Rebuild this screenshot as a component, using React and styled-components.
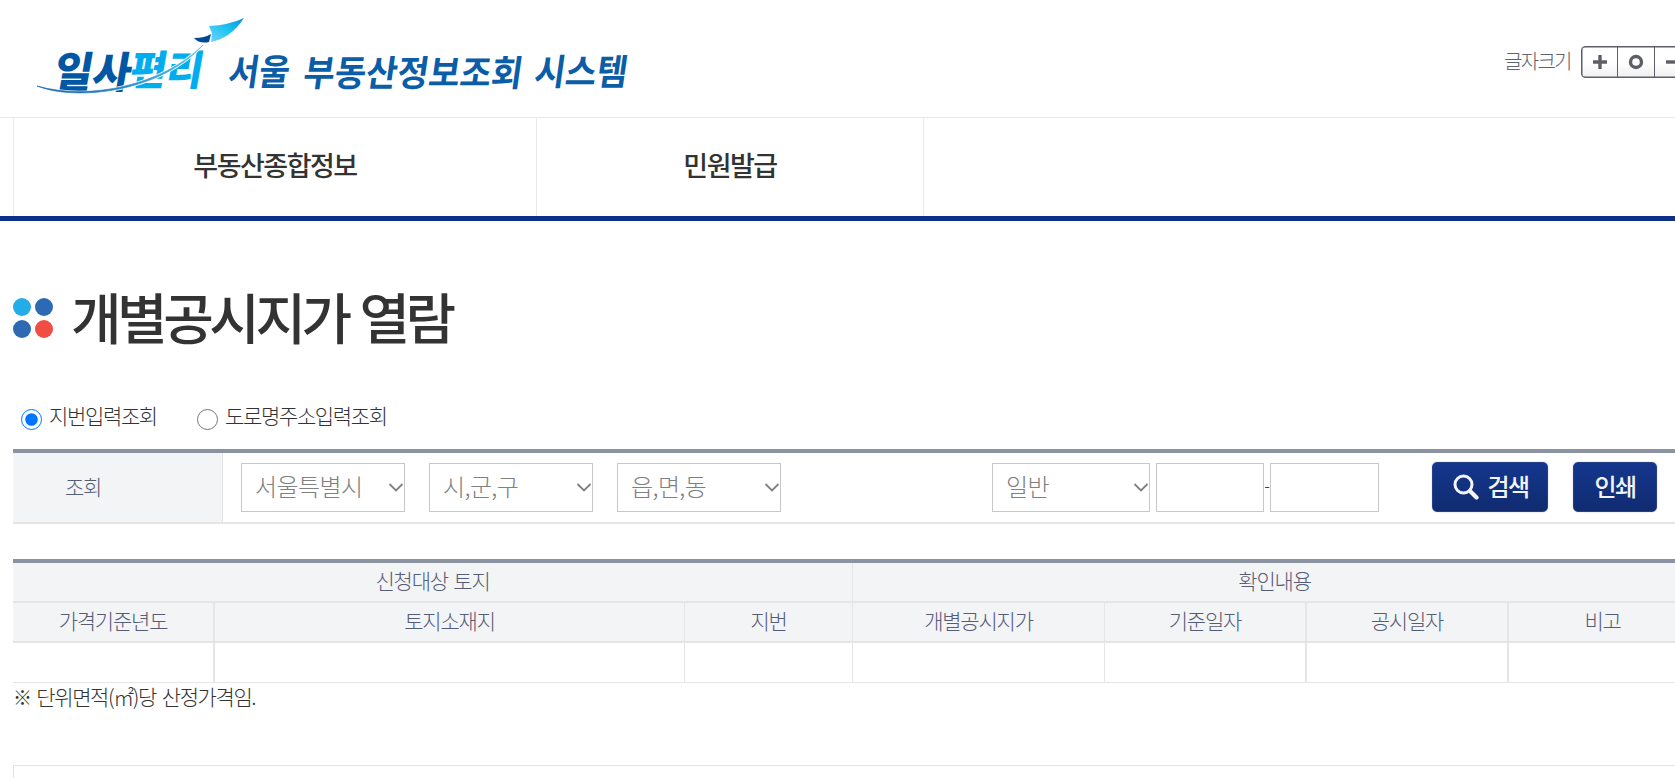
import React from "react";
import styled, { createGlobalStyle } from "styled-components";

const GlobalStyle = createGlobalStyle`
  * { box-sizing: border-box; }
  body {
    margin: 0;
    background: #fff;
    color: #333;
    font-family: "Noto Sans CJK KR", sans-serif;
    font-size: 21px;
    font-weight: 300;
    letter-spacing: -1.4px;
  }
  input, select, button { font: inherit; letter-spacing: inherit; }
`;

const Page = styled.div`
  width: 100%;
  height: 778px;
  overflow: hidden;
`;

const Header = styled.header`
  display: flex;
  justify-content: space-between;
  height: 117px;
`;

const LogoArt = styled.svg`
  display: block;
  width: 660px;
  height: 117px;
  flex: none;
`;

const FontSizer = styled.div`
  display: flex;
  align-items: center;
  gap: 10px;
  height: 32px;
  margin-top: 46px;
  width: 171px;
  flex: none;
  color: #5f636b;
`;

const SizerLabel = styled.span`
  width: 67px;
  padding-bottom: 4px;
  white-space: nowrap;
  flex: none;
  font-size: 20px;
  letter-spacing: -1.7px;
`;

const SizerButtons = styled.div`
  display: flex;
  flex: none;
  height: 32px;
  border: 1px solid #5c5e68;
  border-radius: 4px;
  box-shadow: inset 0 0 0 0.5px #5c5e68;
  background: linear-gradient(#fff 50%, #f0f0f2);
`;

const SizerButton = styled.button`
  width: ${(p) => (p.$first ? 35 : 37)}px;
  padding: 0;
  border: 0;
  border-left: ${(p) => (p.$first ? 0 : "1px solid #5c5e68")};
  background: none;
  display: flex;
  align-items: center;
  justify-content: center;
`;

const Nav = styled.nav`
  display: flex;
  height: 104px;
  padding-left: 13px;
  border-top: 1px solid #e9e9e9;
  border-bottom: 5px solid #0e3088;
`;

const NavItem = styled.a`
  display: flex;
  align-items: center;
  justify-content: center;
  width: ${(p) => p.$w}px;
  padding-bottom: 5px;
  border-left: 1px solid #e9e9e9;
  border-right: ${(p) => (p.$last ? "1px solid #e9e9e9" : 0)};
  font-size: 27px;
  font-weight: 500;
  letter-spacing: -1.5px;
`;

const Main = styled.main`
  width: 1696px;
  padding-left: 13px;
`;

const TitleRow = styled.div`
  display: flex;
  align-items: center;
  gap: 18px;
  height: 60px;
  margin-top: 67px;
`;

const Dots = styled.div`
  display: grid;
  grid-template-columns: 18px 18px;
  gap: 4px;
`;

const Dot = styled.i`
  height: 18px;
  border-radius: 50%;
  background: ${(p) => p.$c};
`;

const Title = styled.h1`
  margin: 0;
  padding-bottom: 7px;
  font-size: 55px;
  line-height: 60px;
  font-weight: 500;
  letter-spacing: -4.5px;
  word-spacing: 4px;
`;

const Modes = styled.div`
  display: flex;
  height: 101px;
  padding: 53px 0 0 8px;
`;

const Mode = styled.label`
  display: flex;
  align-items: flex-start;
  gap: 7px;
  width: 176px;
  white-space: nowrap;
  line-height: 28px;
  letter-spacing: -1.35px;
`;

const Radio = styled.input`
  width: 21px;
  height: 21px;
  margin: 8px 0 0;
  flex: none;
`;

const SearchBar = styled.form`
  display: flex;
  height: 75px;
  border-top: 4px solid #8c93a0;
  border-bottom: 2px solid #e5e5e5;
`;

const SearchLabel = styled.div`
  width: 210px;
  padding-left: 52px;
  border-right: 1px solid #e3e4e6;
  background: #f3f4f6;
  color: #555c76;
  line-height: 67px;
`;

const Fields = styled.div`
  display: flex;
  align-items: flex-start;
  padding: 10px 0 0 18px;
`;

const SelectBox = styled.div`
  position: relative;
  width: ${(p) => p.$w}px;
  height: 49px;
  margin-right: ${(p) => p.$gap}px;
`;

const Select = styled.select`
  appearance: none;
  display: block;
  width: 100%;
  height: 49px;
  padding: 0 0 4px 13px;
  border: 1px solid #c8c8c8;
  border-radius: 0;
  background: #fff;
  color: #808080;
  font-size: 24px;
  letter-spacing: -0.6px;
`;

const Chevron = styled.svg`
  position: absolute;
  right: 1px;
  top: 19px;
  width: 16px;
  height: 11px;
  pointer-events: none;
`;

const NumberInput = styled.input`
  width: ${(p) => p.$w}px;
  height: 49px;
  padding: 0 10px;
  border: 1px solid #c8c8c8;
  border-radius: 0;
`;

const Dash = styled.span`
  width: 6px;
  line-height: 44px;
  text-align: center;
  letter-spacing: 0;
  font-size: 17px;
`;

const ActionButton = styled.button`
  display: flex;
  align-items: center;
  justify-content: center;
  gap: 9px;
  width: ${(p) => p.$w}px;
  height: 50px;
  margin: -1px 0 0 ${(p) => p.$ml}px;
  padding: 0 0 4px;
  border: 1px solid #263f85;
  border-radius: 5px;
  background: linear-gradient(#14368d, #102b70);
  box-shadow: 0 0 1px #63729c;
  color: #f2f4fa;
  font-size: 24px;
  font-weight: 500;
  letter-spacing: -1.6px;

  svg { margin: 3px 0 0 1px; }
`;

const Table = styled.table`
  width: 1683px;
  margin-top: 35px;
  border-top: 4px solid #8c93a0;
  border-spacing: 0;
  table-layout: fixed;
  letter-spacing: -1.2px;
`;

const Head = styled.th`
  height: 40px;
  padding: 0 0 5px;
  border-bottom: 2px solid #e5e5e5;
  border-right: ${(p) => p.$line || 0}px solid #e5e5e5;
  background: #f3f4f6;
  color: #555c76;
  font-weight: 300;
  line-height: 30px;
  word-spacing: 2px;
`;

const Cell = styled.td`
  height: 40px;
  padding: 0;
  border-bottom: 1px solid #e5e5e5;
  border-right: ${(p) => p.$line || 0}px solid #e5e5e5;
`;

const Note = styled.p`
  margin: 0;
  height: 82px;
  line-height: 26px;
  letter-spacing: -1.4px;
  word-spacing: 2.5px;
`;

const Mark = styled.span`
  font-size: 19px;
`;

const Notice = styled.section`
  height: 60px;
  border: 1px solid #e3e3e3;
`;

const columns = [
  { label: "가격기준년도", width: 202, line: 2 },
  { label: "토지소재지", width: 470, line: 1 },
  { label: "지번", width: 168, line: 1 },
  { label: "개별공시지가", width: 252, line: 1 },
  { label: "기준일자", width: 202, line: 2 },
  { label: "공시일자", width: 202, line: 2 },
  { label: "비고", width: 187, line: 0 },
];

function Logo() {
  const fit = { lengthAdjust: "spacingAndGlyphs" };
  return (
    <LogoArt viewBox="0 0 660 117" role="img" fontFamily="'Noto Sans CJK KR', sans-serif" letterSpacing="0">
      <defs>
        <linearGradient id="plane" x1="0" y1="1" x2="1" y2="0">
          <stop offset="0" stopColor="#76d3f7" />
          <stop offset="0.5" stopColor="#20c4f3" />
          <stop offset="1" stopColor="#0793d4" />
        </linearGradient>
        <linearGradient id="trail">
          <stop offset="0" stopColor="#1968ae" />
          <stop offset="0.5" stopColor="#2a83c2" />
          <stop offset="1" stopColor="#52c6ef" />
        </linearGradient>
      </defs>
      <g fontWeight="900" fontSize="43">
        <text transform="translate(52 88) skewX(-10)" fill="#0057a3" textLength="77" {...fit}>일사</text>
        <text transform="translate(128 85) skewX(-10) scale(1 .95)" fill="#00aeef" textLength="73" {...fit}>편리</text>
      </g>
      <path d="M37 86 C78 102 162 91 203 45 C163 84 90 102 37 86Z" fill="#fff" stroke="#fff" strokeWidth="2.4" />
      <path d="M37 86 C78 102 162 91 203 45 C163 85 90 101 37 86Z" fill="url(#trail)" stroke="url(#trail)" strokeWidth="0.7" />
      <path d="M209 26 Q229 25 244 18 Q231 38 211 42 L212 33Z" fill="url(#plane)" />
      <path d="M194 38 Q205 38 211 34 L209 42 Q199 44 194 38Z" fill="#004a92" />
      <g fontWeight="700" fontSize="36" fill="#0a5da6">
        <text transform="translate(227 85) skewX(-8)" textLength="61" {...fit}>서울</text>
        <text transform="translate(302 86) skewX(-8)" textLength="219" {...fit}>부동산정보조회</text>
        <text transform="translate(533 85) skewX(-8)" textLength="93" {...fit}>시스템</text>
      </g>
    </LogoArt>
  );
}

function SelectField({ value, width, gap }) {
  return (
    <SelectBox $w={width} $gap={gap}>
      <Select defaultValue={value}>
        <option>{value}</option>
      </Select>
      <Chevron viewBox="0 0 16 11">
        <path d="M1.5 2 8 8.5 14.5 2" fill="none" stroke="#808080" strokeWidth="1.8" />
      </Chevron>
    </SelectBox>
  );
}

export default function App() {
  return (
    <Page>
      <GlobalStyle />
      <Header>
        <Logo />
        <FontSizer>
          <SizerLabel>글자크기</SizerLabel>
          <SizerButtons>
            <SizerButton $first>
              <svg width="14" height="14"><path d="M7 0V14M0 7H14" stroke="#5c5e68" strokeWidth="3.4" /></svg>
            </SizerButton>
            <SizerButton>
              <svg width="16" height="16"><circle cx="8" cy="8" r="5.5" fill="none" stroke="#5c5e68" strokeWidth="3.4" /></svg>
            </SizerButton>
            <SizerButton>
              <svg width="14" height="14"><path d="M0 7H14" stroke="#5c5e68" strokeWidth="3.4" /></svg>
            </SizerButton>
          </SizerButtons>
        </FontSizer>
      </Header>
      <Nav>
        <NavItem $w={523}>부동산종합정보</NavItem>
        <NavItem $w={388} $last>민원발급</NavItem>
      </Nav>
      <Main>
        <TitleRow>
          <Dots>
            <Dot $c="#24ace8" />
            <Dot $c="#2c6bb3" />
            <Dot $c="#2c6bb3" />
            <Dot $c="#f04d45" />
          </Dots>
          <Title>개별공시지가 열람</Title>
        </TitleRow>
        <Modes>
          <Mode><Radio type="radio" name="mode" defaultChecked />지번입력조회</Mode>
          <Mode><Radio type="radio" name="mode" />도로명주소입력조회</Mode>
        </Modes>
        <SearchBar>
          <SearchLabel>조회</SearchLabel>
          <Fields>
            <SelectField value="서울특별시" width={164} gap={24} />
            <SelectField value="시,군,구" width={164} gap={24} />
            <SelectField value="읍,면,동" width={164} gap={211} />
            <SelectField value="일반" width={158} gap={6} />
            <NumberInput $w={108} />
            <Dash>-</Dash>
            <NumberInput $w={109} />
            <ActionButton type="button" $w={116} $ml={53}>
              <svg width="26" height="26" viewBox="0 0 26 26" fill="none" stroke="#f2f4fa">
                <circle cx="10.5" cy="10.5" r="8.5" strokeWidth="3" />
                <path d="M17 17 23.5 23.5" strokeWidth="4.2" strokeLinecap="round" />
              </svg>
              검색
            </ActionButton>
            <ActionButton type="button" $w={84} $ml={25}>인쇄</ActionButton>
          </Fields>
        </SearchBar>
        <Table>
          <colgroup>
            {columns.map((c) => <col key={c.label} width={c.width} />)}
          </colgroup>
          <thead>
            <tr>
              <Head colSpan={3} $line={1}>신청대상 토지</Head>
              <Head colSpan={4}>확인내용</Head>
            </tr>
            <tr>
              {columns.map((c) => <Head key={c.label} $line={c.line}>{c.label}</Head>)}
            </tr>
          </thead>
          <tbody>
            <tr>
              {columns.map((c) => <Cell key={c.label} $line={c.line} />)}
            </tr>
          </tbody>
        </Table>
        <Note><Mark>※</Mark> 단위면적(㎡)당 산정가격임.</Note>
        <Notice />
      </Main>
    </Page>
  );
}
